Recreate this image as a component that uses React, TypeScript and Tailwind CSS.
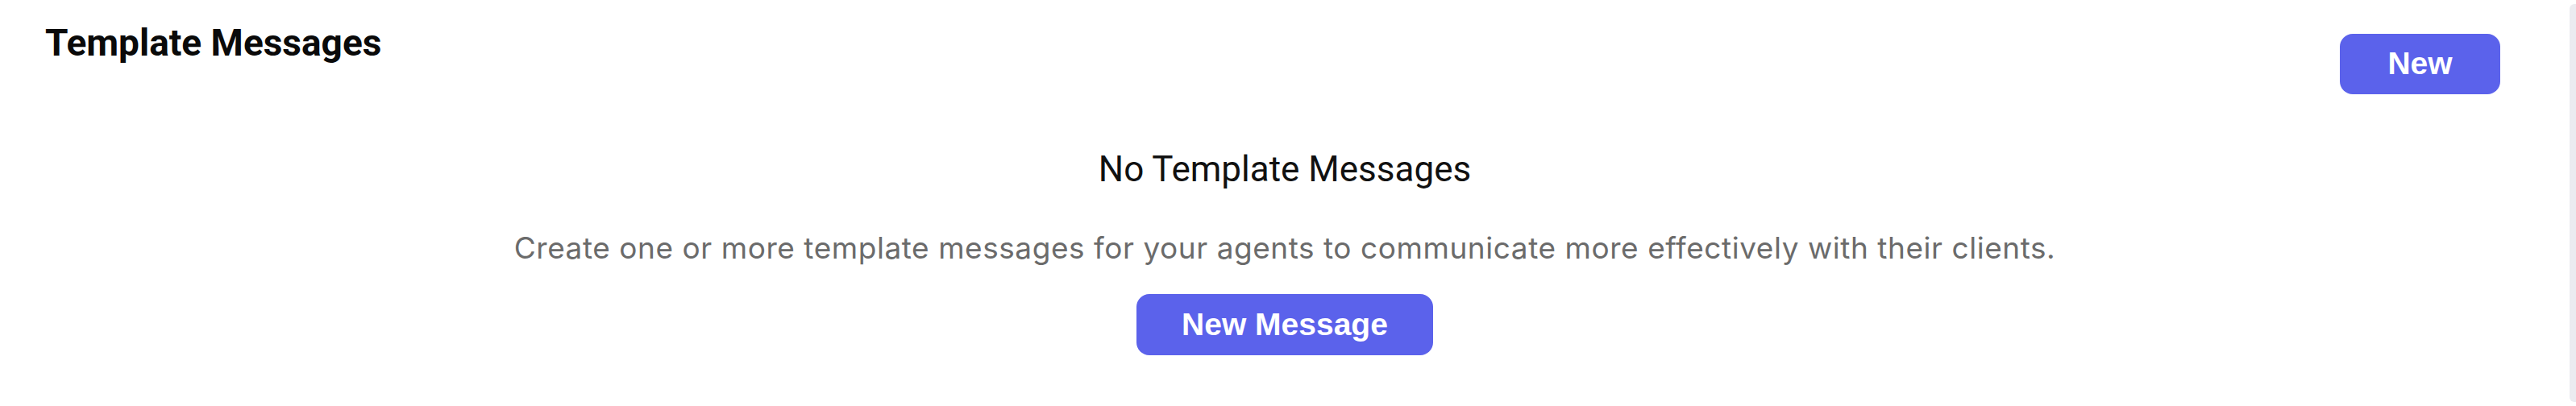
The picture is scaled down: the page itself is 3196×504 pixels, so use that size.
import React from "react";

export default function App() {
  return (
    <div className="flex h-[504px] w-full bg-white">
      <div className="flex min-w-0 flex-1 flex-col">
        <div className="flex items-start justify-between pl-[56px] pr-[86px]">
          <h1 className="mt-[27px] text-[46px] font-bold leading-[52px] text-[#0a0a0a] [font-family:Roboto,'Noto_Sans',sans-serif]">
            Template Messages
          </h1>
          <button className="mt-[42px] flex h-[75px] w-[199px] items-center justify-center rounded-[16px] bg-[#5b62eb] text-[39px] font-bold text-white [font-family:'Liberation_Sans',Arial,sans-serif]">
            New
          </button>
        </div>
        <div className="flex flex-col items-center">
          <div className="mt-[67px] text-[44px] leading-[52px] text-[#111111] [font-family:Roboto,'Noto_Sans',sans-serif]">
            No Template Messages
          </div>
          <p className="mt-[50px] text-[37px] leading-[44px] tracking-[0.55px] text-[#6b6b6b] [font-family:Inter,'Noto_Sans',sans-serif]">
            Create one or more template messages for your agents to communicate more effectively with their clients.
          </p>
          <button className="mt-[35px] flex h-[76px] w-[368px] items-center justify-center rounded-[16px] bg-[#5b62eb] text-[39px] font-bold text-white [font-family:'Liberation_Sans',Arial,sans-serif]">
            New Message
          </button>
        </div>
      </div>
      <div className="my-[5px] w-[8px] rounded-l-[6px] bg-[#ebebf0]" />
    </div>
  );
}
